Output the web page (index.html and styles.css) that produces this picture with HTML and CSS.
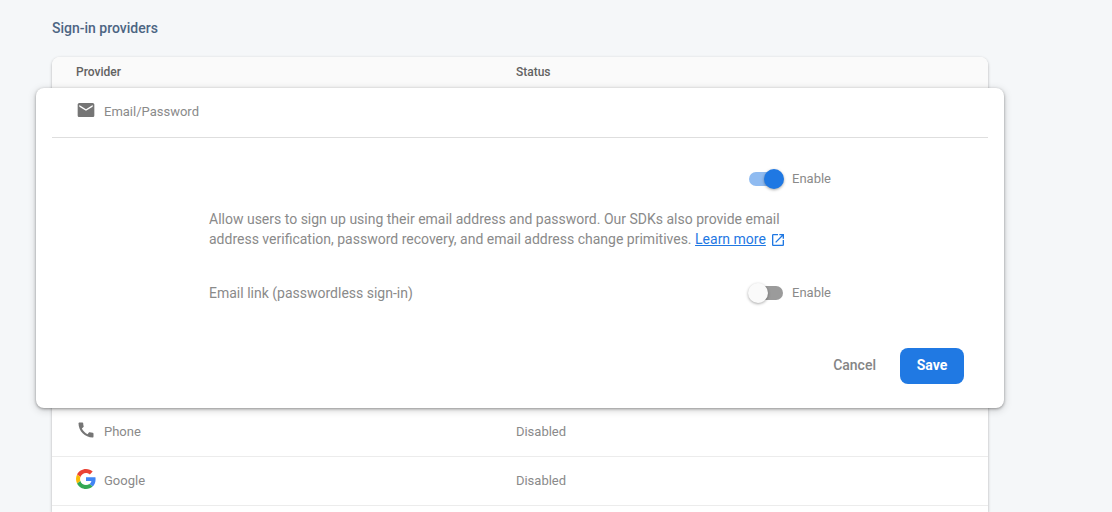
FILE: index.html
```html
<!DOCTYPE html>
<html lang="en">
<head>
<meta charset="utf-8">
<meta name="viewport" content="width=device-width, initial-scale=1">
<title>Sign-in providers</title>
<link rel="stylesheet" href="styles.css">
</head>
<body>
<main class="page">
  <h1 class="title">Sign-in providers</h1>
  <div class="card">
    <table class="providers">
      <thead>
        <tr><th class="col-provider" scope="col">Provider</th><th scope="col">Status</th></tr>
      </thead>
      <tbody>
        <tr>
          <td class="expanded" colspan="2">
            <form class="panel">
              <div class="panel-header">
                <span class="provider">
                  <svg class="icon" viewBox="0 0 24 24" aria-hidden="true"><path fill="#757575" d="M20 3.500H4c-1.100 0-2 .9-2 2v13c0 1.100.9 2 2 2h16c1.100 0 2-.9 2-2v-13c0-1.100-.9-2-2-2zm0 4.500l-8 5-8-5V6l8 5 8-5v2z"/></svg>
                  Email/Password
                </span>
              </div>
              <div class="settings">
                <div class="setting setting-end">
                  <label class="toggle"><input class="switch" type="checkbox" checked>Enable</label>
                </div>
                <p class="description">Allow users to sign up using their email address and password. Our SDKs also provide email address verification, password recovery, and email address change primitives. <a class="link" href="#">Learn more</a><svg class="link-icon" viewBox="0 0 24 24" aria-hidden="true"><path fill="currentColor" d="M19 19H5V5h7V3H5c-1.110 0-2 .9-2 2v14c0 1.100.89 2 2 2h14c1.100 0 2-.9 2-2v-7h-2v7zM14 3v2h3.590l-9.830 9.830 1.410 1.410L19 6.410V10h2V3h-7z"/></svg></p>
                <div class="setting">
                  <span class="setting-name">Email link (passwordless sign-in)</span>
                  <label class="toggle"><input class="switch" type="checkbox">Enable</label>
                </div>
              </div>
              <div class="actions">
                <button class="button" type="button">Cancel</button>
                <button class="button button-primary" type="submit">Save</button>
              </div>
            </form>
          </td>
        </tr>
        <tr>
          <td>
            <span class="provider">
              <svg class="icon" viewBox="0 0 24 24" aria-hidden="true"><path fill="#757575" d="M20.010 15.380c-1.230 0-2.420-.2-3.530-.56-.35-.12-.74-.03-1.010.24l-1.570 1.970c-2.830-1.350-5.480-3.900-6.890-6.830l1.950-1.660c.27-.28.35-.67.24-1.020-.37-1.110-.56-2.300-.56-3.530 0-.54-.45-.99-.99-.99H4.190C3.650 3 3 3.240 3 3.990 3 13.280 10.730 21 20.010 21c.71 0 .99-.63.99-1.180v-3.450c0-.54-.45-.99-.99-.99z"/></svg>
              Phone
            </span>
          </td>
          <td>Disabled</td>
        </tr>
        <tr>
          <td>
            <span class="provider">
              <svg class="icon" viewBox="0 0 48 48" aria-hidden="true">
                <path fill="#EA4335" d="M24 9.500c3.540 0 6.710 1.220 9.210 3.600l6.850-6.850C35.900 2.380 30.470 0 24 0 14.620 0 6.510 5.380 2.560 13.220l7.980 6.190C12.430 13.720 17.740 9.500 24 9.500z"/>
                <path fill="#4285F4" d="M46.980 24.550c0-1.570-.15-3.090-.38-4.550H24v9.020h12.940c-.58 2.960-2.260 5.480-4.780 7.180l7.730 6c4.510-4.180 7.090-10.360 7.090-17.650z"/>
                <path fill="#FBBC05" d="M10.530 28.590c-.48-1.450-.76-2.990-.76-4.590s.27-3.140.76-4.590l-7.980-6.190C.92 16.460 0 20.120 0 24c0 3.880.92 7.540 2.560 10.780l7.970-6.190z"/>
                <path fill="#34A853" d="M24 48c6.480 0 11.930-2.130 15.890-5.810l-7.730-6c-2.150 1.450-4.920 2.300-8.160 2.300-6.260 0-11.570-4.220-13.470-9.910l-7.980 6.190C6.510 42.620 14.620 48 24 48z"/>
              </svg>
              Google
            </span>
          </td>
          <td>Disabled</td>
        </tr>
      </tbody>
    </table>
  </div>
</main>
</body>
</html>
```
FILE: styles.css
```css
* {
  box-sizing: border-box;
}

body {
  margin: 0;
  background: #f5f7f9;
  color: #8a8a8a;
  font: 13px/20px Roboto, sans-serif;
}

.page {
  display: flex;
  flex-direction: column;
  height: 100vh;
  padding: 18px 124px 0 52px;
}

.title {
  margin: 0 0 19px;
  color: #4c6583;
  font-size: 14px;
  font-weight: 500;
}

.card {
  flex: 1;
  border-radius: 8px 8px 0 0;
  background: #fff;
  box-shadow: 0 1px 3px rgba(0, 0, 0, 0.3);
}

.providers {
  width: 100%;
  border-collapse: separate;
  border-spacing: 0;
  table-layout: fixed;
}

.providers th {
  height: 31px;
  padding: 0 24px 2px;
  background: #fafafa;
  color: #626262;
  font-size: 12px;
  font-weight: 500;
  text-align: left;
}

.providers th:first-child {
  border-radius: 8px 0 0 0;
}

.providers th:last-child {
  border-radius: 0 8px 0 0;
}

.providers .col-provider {
  width: 47%;
}

.providers td {
  height: 49px;
  padding: 0 24px;
  border-bottom: 1px solid #ececec;
}

.providers .expanded {
  padding: 0;
  border: 0;
}

.panel {
  margin: 0 -16px;
  padding: 0 16px 24px;
  border-radius: 8px;
  background: #fff;
  box-shadow: 0 1px 3px rgba(0, 0, 0, 0.35), 0 2px 8px rgba(0, 0, 0, 0.18);
}

.panel-header {
  display: flex;
  align-items: center;
  height: 50px;
  padding: 0 24px 2px;
  border-bottom: 1px solid #dedede;
}

.provider {
  display: flex;
  align-items: center;
  gap: 8px;
}

.icon {
  width: 20px;
  height: 20px;
  margin-bottom: 4px;
}

.settings {
  max-width: 622px;
  margin: 0 auto;
  padding: 31px 0 45px;
}

.setting {
  display: flex;
  align-items: center;
  justify-content: space-between;
}

.setting-end {
  justify-content: flex-end;
}

.setting-name,
.description {
  font-size: 14px;
}

.description {
  margin: 20px 0 34px;
  padding-right: 44px;
}

.link,
.link-icon {
  color: #1f78e3;
}

.link-icon {
  width: 16px;
  height: 16px;
  margin-left: 4px;
  vertical-align: -4px;
}

.toggle {
  display: flex;
  align-items: center;
  gap: 8px;
}

.switch {
  display: grid;
  align-items: center;
  width: 36px;
  height: 20px;
  margin: 0;
  appearance: none;
}

.switch::before,
.switch::after {
  grid-area: 1 / 1;
  content: "";
}

.switch::before {
  height: 14px;
  margin: 0 1px;
  border-radius: 7px;
  background: #9b9b9b;
}

.switch::after {
  width: 20px;
  height: 20px;
  border-radius: 50%;
  background: #fafafa;
  box-shadow: 0 1px 3px rgba(0, 0, 0, 0.35);
}

.switch:checked::before {
  background: #8fbbf1;
}

.switch:checked::after {
  justify-self: end;
  background: #1f78e3;
}

.actions {
  display: flex;
  justify-content: flex-end;
  gap: 8px;
  padding-right: 24px;
}

.button {
  min-width: 64px;
  height: 36px;
  padding: 0 16px 2px;
  border: 0;
  border-radius: 8px;
  background: none;
  color: #858585;
  font: 500 14px/20px Roboto, sans-serif;
}

.button-primary {
  background: #2079e3;
  color: #fff;
  font-weight: 700;
}
```
